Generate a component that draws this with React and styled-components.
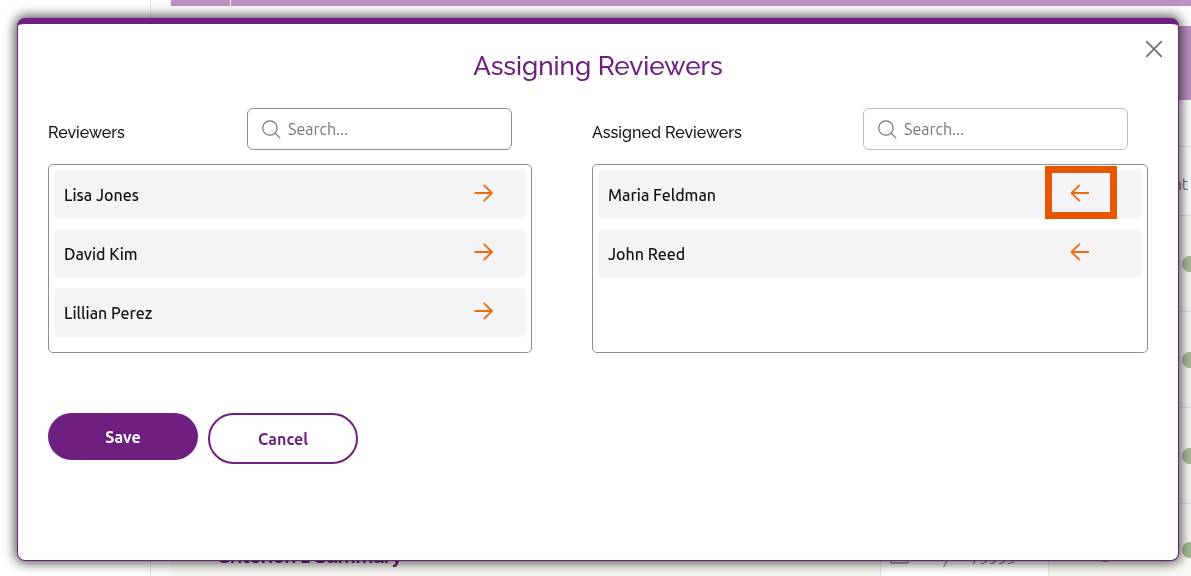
import React, { useState } from 'react';
import styled, { createGlobalStyle, css, ThemeProvider } from 'styled-components';

const theme = {
    purple: '#6f1f80',
    lilac: '#ba91c0',
    orange: '#e96c12',
    highlight: '#e85600',
    row: '#f4f4f7',
    cream: '#faf8f4',
    line: '#e6e2ea',
    border: '#8f8f92',
    lightBorder: '#bdbdc0',
    heading: 'Raleway, Lato, sans-serif',
    body: 'Ubuntu, "Noto Sans", sans-serif',
};

const GlobalStyle = createGlobalStyle`
    *, *::before, *::after {
        box-sizing: border-box;
    }

    body {
        margin: 0;
        background-color: white;
        font-family: ${({theme}) => theme.body};
        font-size: 16px;
        line-height: 24px;
        color: #111;
    }
`;

const Page = styled.div`
    display: grid;
    grid-template-columns: 151px minmax(0, 1fr);
    height: 100vh;
    overflow: hidden;
`;

const Sidebar = styled.aside`
    border-right: 1px solid #e4e4e4;
`;

const Content = styled.div`
    padding-left: 20px;
    background-color: #fdfdfd;
    overflow: hidden;
`;

const TopBar = styled.div`
    display: grid;
    grid-template-columns: 60px 1fr;
    height: 6px;
    margin-bottom: 20px;
    background-color: ${({theme}) => theme.lilac};

    span:first-child {
        border-right: 1px solid white;
    }
`;

const Banner = styled.div`
    height: 74px;
    background-color: ${({theme}) => theme.lilac};
`;

const GridRow = styled.div`
    display: grid;
    grid-template-columns: minmax(0, 1fr) 169px 110px 32px;
    height: ${({height}) => height}px;
    border-bottom: 1px solid ${({theme}) => theme.line};
    background-color: ${({tinted, theme}) => tinted ? theme.cream : '#fdfdfd'};
`;

const GridCell = styled.div`
    display: flex;
    align-items: center;
    gap: 36px;
    padding-top: ${({drop}) => drop || 0}px;
    padding-left: ${({inset}) => inset || 0}px;
    color: #77777a;
    white-space: nowrap;

    ${({boxed}) =>
        boxed && css`
            border: solid ${({theme}) => theme.line};
            border-width: 0 1px;
            background-color: white;
        `}
`;

const Summary = styled.span`
    font-family: ${({theme}) => theme.heading};
    font-size: 19px;
    font-weight: 700;
    color: ${({theme}) => theme.purple};
`;

const Square = styled.span`
    width: 19px;
    height: 19px;
    border: 2px solid #aaa;
    border-radius: 2px;
`;

const Code = styled.em`
    display: flex;
    gap: 20px;
    padding-top: 6px;
`;

const Dot = styled.span`
    flex: none;
    width: 16px;
    height: 16px;
    border-radius: 50%;
    background-color: ${({alert}) => alert ? '#c56a6a' : '#a6bd94'};
`;

const Dialog = styled.section`
    position: fixed;
    top: 18px;
    right: 12px;
    bottom: 15px;
    left: 17px;
    padding: 24px 30px;
    border: 1px solid ${({theme}) => theme.purple};
    border-top-width: 6px;
    border-radius: 8px;
    background-color: white;
    box-shadow: 0 0 12px 2px rgba(0, 0, 0, 0.7);
`;

const CloseButton = styled.button`
    position: absolute;
    top: 15px;
    right: 14px;
    display: flex;
    padding: 0;
    border: none;
    background: none;
    color: #6f6f73;
    cursor: pointer;
`;

const Title = styled.h1`
    margin: 0 0 24px;
    font-family: ${({theme}) => theme.heading};
    font-size: 26px;
    font-weight: 500;
    line-height: 36px;
    text-align: center;
    color: ${({theme}) => theme.purple};
`;

const Columns = styled.div`
    display: grid;
    grid-template-columns: 484fr 556fr;
    gap: 60px;
    margin-bottom: 60px;
`;

const Column = styled.div`
    display: flex;
    flex-direction: column;
    gap: 14px;
`;

const ColumnHeader = styled.div`
    display: flex;
    align-items: center;
    justify-content: space-between;
    padding-right: 20px;
`;

const ColumnTitle = styled.h2`
    margin: 0;
    padding-top: 8px;
    font-family: ${({theme}) => theme.heading};
    font-size: 16px;
    font-weight: 500;
    line-height: 24px;
`;

const SearchBox = styled.label`
    display: flex;
    align-items: center;
    gap: 7px;
    width: 265px;
    height: 42px;
    padding: 0 13px;
    border: 1px solid ${({muted, theme}) => muted ? theme.lightBorder : theme.border};
    border-radius: 6px;
    color: #77777a;
`;

const SearchInput = styled.input`
    flex: 1;
    min-width: 0;
    padding: 0;
    border: none;
    outline: none;
    background: none;
    font-family: inherit;
    font-size: 16px;
    line-height: 24px;

    &::placeholder {
        color: #77777a;
        opacity: 1;
    }
`;

const List = styled.ul`
    display: flex;
    flex-direction: column;
    gap: 10px;
    min-height: 189px;
    margin: 0;
    padding: 5px;
    border: 1px solid ${({theme}) => theme.border};
    border-radius: 5px;
    list-style: none;
`;

const Item = styled.li`
    display: flex;
    align-items: center;
    justify-content: space-between;
    height: 49px;
    padding: 0 ${({inset}) => inset}px 0 10px;
    border-radius: 5px;
    background-color: ${({theme}) => theme.row};
    font-weight: 500;
`;

const MoveButton = styled.button`
    position: relative;
    display: flex;
    padding: 0 0 4px;
    border: none;
    background: none;
    color: ${({theme}) => theme.orange};
    cursor: pointer;

    ${({highlighted}) =>
        highlighted && css`
            &::after {
                content: '';
                position: absolute;
                top: -18px;
                left: -25px;
                width: 72px;
                height: 53px;
                border: 7px solid ${({theme}) => theme.highlight};
            }
        `}
`;

const Actions = styled.div`
    display: flex;
    align-items: flex-start;
    gap: 10px;
`;

const ActionButton = styled.button`
    width: 150px;
    height: 47px;
    border: none;
    border-radius: 26px;
    background-color: ${({theme}) => theme.purple};
    color: white;
    font-family: inherit;
    font-size: 16px;
    font-weight: 700;
    cursor: pointer;

    ${({secondary}) =>
        secondary && css`
            height: 51px;
            border: 2px solid ${({theme}) => theme.purple};
            background-color: white;
            color: ${({theme}) => theme.purple};
        `}
`;

const SearchIcon = () => (
    <svg width="20" height="20" viewBox="0 0 20 20" fill="none" stroke="currentColor" strokeWidth="1.2" strokeLinecap="round" aria-hidden="true">
        <circle cx="8.9" cy="9" r="7.2" />
        <path d="M14.1 14.2L18.8 18.9" />
    </svg>
);

const CloseIcon = () => (
    <svg width="20" height="20" viewBox="0 0 20 20" fill="none" stroke="currentColor" strokeWidth="1.7" strokeLinecap="round" aria-hidden="true">
        <path d="M2.7 2.7L17.3 17.3M17.3 2.7L2.7 17.3" />
    </svg>
);

const ArrowIcon = ({ direction }) => (
    <svg width="20" height="18" viewBox="0 0 20 18" fill="none" stroke="currentColor" strokeWidth="1.9" strokeLinecap="round" strokeLinejoin="round" aria-hidden="true">
        {direction === 'right'
            ? <path d="M1.2 9H18M10.2 1.4L18 9L10.2 16.6" />
            : <path d="M18.3 9H1.5M9.3 1.4L1.5 9L9.3 16.6" />}
    </svg>
);

const ReviewerColumn = ({ title, names, direction, inset, muted, highlightedName }) => {
    const [query, setQuery] = useState('');
    const visible = names.filter(name => name.toLowerCase().includes(query.toLowerCase()));

    return (
        <Column>
            <ColumnHeader>
                <ColumnTitle>{title}</ColumnTitle>
                <SearchBox muted={muted ? 1 : undefined}>
                    <SearchIcon />
                    <SearchInput
                        aria-label={`Search ${title}`}
                        placeholder="Search..."
                        value={query}
                        onChange={e => setQuery(e.target.value)}
                    />
                </SearchBox>
            </ColumnHeader>
            <List>
                {visible.map(name => (
                    <Item key={name} inset={inset}>
                        <span>{name}</span>
                        <MoveButton type="button" aria-label={`Move ${name}`} highlighted={name === highlightedName ? 1 : undefined}>
                            <ArrowIcon direction={direction} />
                        </MoveButton>
                    </Item>
                ))}
            </List>
        </Column>
    );
};

const Background = () => (
    <Page aria-hidden="true">
        <Sidebar />
        <Content>
            <TopBar><span /><span /></TopBar>
            <Banner />
            <GridRow height={47} />
            <GridRow height={69}>
                <GridCell />
                <GridCell />
                <GridCell />
                <GridCell drop={6}>Stat</GridCell>
            </GridRow>
            {[96, 96, 96].map((height, i) => (
                <GridRow key={i} height={height} tinted={1}>
                    <GridCell />
                    <GridCell boxed={1} />
                    <GridCell />
                    <GridCell inset={23}><Dot /></GridCell>
                </GridRow>
            ))}
            <GridRow height={92} tinted={1}>
                <GridCell inset={46} drop={12}><Summary>Criterion 1 Summary</Summary></GridCell>
                <GridCell boxed={1} inset={9} drop={10}>
                    <Square />
                    <Code><span>/</span><span>79999</span></Code>
                </GridCell>
                <GridCell inset={48} drop={8}><Dot alert={1} /></GridCell>
                <GridCell inset={23}><Dot /></GridCell>
            </GridRow>
        </Content>
    </Page>
);

const App = () => (
    <ThemeProvider theme={theme}>
        <GlobalStyle />
        <Background />
        <Dialog role="dialog" aria-labelledby="dialog-title">
            <CloseButton type="button" aria-label="Close"><CloseIcon /></CloseButton>
            <Title id="dialog-title">Assigning Reviewers</Title>
            <Columns>
                <ReviewerColumn
                    title="Reviewers"
                    names={['Lisa Jones', 'David Kim', 'Lillian Perez']}
                    direction="right"
                    inset={32}
                />
                <ReviewerColumn
                    title="Assigned Reviewers"
                    names={['Maria Feldman', 'John Reed']}
                    direction="left"
                    inset={52}
                    muted
                    highlightedName="Maria Feldman"
                />
            </Columns>
            <Actions>
                <ActionButton type="button">Save</ActionButton>
                <ActionButton type="button" secondary={1}>Cancel</ActionButton>
            </Actions>
        </Dialog>
    </ThemeProvider>
);

export default App;
